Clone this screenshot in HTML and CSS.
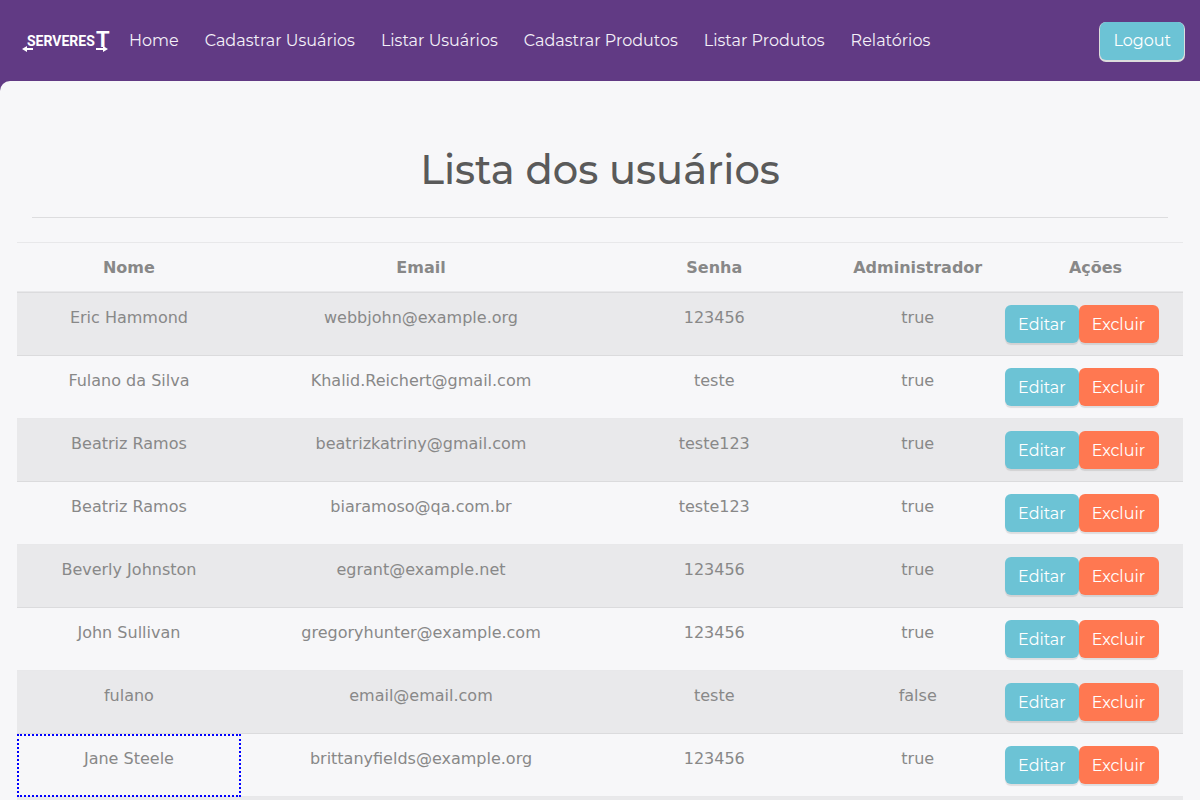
FILE: index.html
```html
<!DOCTYPE html>
<html lang="pt-BR">
<head>
<meta charset="utf-8">
<title>Lista dos usuários</title>
<link rel="stylesheet" href="styles.css">
</head>
<body>
<nav class="navbar">
  <a class="brand" href="#" aria-label="ServeRest">
    <svg width="90" height="30" viewBox="0 -2 90 30" fill="#fff">
      <text class="brand-text" x="5" y="18">SERVERES<tspan class="brand-tail" x="74" y="19">T</tspan></text>
      <path d="M0 21L5 18V20H11V22H5V24ZM86 21L81 18V20H74V22H81V24Z"/>
    </svg>
  </a>
  <a class="nav-link" href="#">Home</a>
  <a class="nav-link" href="#">Cadastrar Usuários</a>
  <a class="nav-link" href="#">Listar Usuários</a>
  <a class="nav-link" href="#">Cadastrar Produtos</a>
  <a class="nav-link" href="#">Listar Produtos</a>
  <a class="nav-link" href="#">Relatórios</a>
  <button class="btn btn-info logout" type="button">Logout</button>
</nav>
<div class="backdrop">
<main class="content">
  <h1 class="title">Lista dos usuários</h1>
  <hr class="rule">
  <table class="users">
    <colgroup><col class="c-name"><col class="c-email"><col class="c-pass"><col class="c-admin"><col class="c-actions"></colgroup>
    <thead><tr><th>Nome</th><th>Email</th><th>Senha</th><th>Administrador</th><th>Ações</th></tr></thead>
    <tbody>
      <tr><td>Eric Hammond</td><td>webbjohn@example.org</td><td>123456</td><td>true</td><td><div class="actions"><button class="btn btn-info" type="button">Editar</button><button class="btn btn-danger" type="button">Excluir</button></div></td></tr>
      <tr><td>Fulano da Silva</td><td>Khalid.Reichert@gmail.com</td><td>teste</td><td>true</td><td><div class="actions"><button class="btn btn-info" type="button">Editar</button><button class="btn btn-danger" type="button">Excluir</button></div></td></tr>
      <tr><td>Beatriz Ramos</td><td>beatrizkatriny@gmail.com</td><td>teste123</td><td>true</td><td><div class="actions"><button class="btn btn-info" type="button">Editar</button><button class="btn btn-danger" type="button">Excluir</button></div></td></tr>
      <tr><td>Beatriz Ramos</td><td>biaramoso@qa.com.br</td><td>teste123</td><td>true</td><td><div class="actions"><button class="btn btn-info" type="button">Editar</button><button class="btn btn-danger" type="button">Excluir</button></div></td></tr>
      <tr><td>Beverly Johnston</td><td>egrant@example.net</td><td>123456</td><td>true</td><td><div class="actions"><button class="btn btn-info" type="button">Editar</button><button class="btn btn-danger" type="button">Excluir</button></div></td></tr>
      <tr><td>John Sullivan</td><td>gregoryhunter@example.com</td><td>123456</td><td>true</td><td><div class="actions"><button class="btn btn-info" type="button">Editar</button><button class="btn btn-danger" type="button">Excluir</button></div></td></tr>
      <tr><td>fulano</td><td>email@email.com</td><td>teste</td><td>false</td><td><div class="actions"><button class="btn btn-info" type="button">Editar</button><button class="btn btn-danger" type="button">Excluir</button></div></td></tr>
      <tr><td class="marked">Jane Steele</td><td>brittanyfields@example.org</td><td>123456</td><td>true</td><td><div class="actions"><button class="btn btn-info" type="button">Editar</button><button class="btn btn-danger" type="button">Excluir</button></div></td></tr>
      <tr><td></td><td></td><td></td><td></td><td></td></tr>
    </tbody>
  </table>
</main>
</div>
</body>
</html>
```
FILE: styles.css
```css
* { box-sizing: border-box; }
html { height: 100%; }
body {
  margin: 0;
  height: 100%;
  overflow: hidden;
  background: #f7f7f9;
  color: #888;
  font: 16px/26px "DejaVu Sans", sans-serif;
}
.navbar {
  display: flex;
  align-items: center;
  gap: 26px;
  min-height: 81px;
  padding: 0 16px 0 22px;
  background: #613a84;
}
.brand { display: flex; margin-right: -9px; }
.brand-text { font: bold 14px Roboto, sans-serif; }
.brand-tail { font-size: 22px; }
.nav-link {
  color: #f4f0f8;
  font: 400 16px/24px Montserrat, sans-serif;
  text-decoration: none;
  white-space: nowrap;
}
.btn {
  height: 38px;
  padding: 1px 13px 0;
  border: 0;
  border-radius: 6px;
  color: #fff;
  font: 400 16px/24px Montserrat, sans-serif;
  box-shadow: 0 2px 1px rgba(0, 0, 0, 0.1);
}
.btn-info { background: #6cc3d5; }
.btn-danger { padding-right: 14px; background: #ff7851; }
.logout {
  margin-left: auto;
  padding-top: 0;
  box-shadow: 0 1px 0 1px #dcdcdc;
}
.backdrop { background: #613a84; }
.content {
  padding: 64px 17px 0;
  background: #f7f7f9;
  border-radius: 10px 0 0 0;
}
.title {
  margin: 0 0 22px;
  color: #5a5a5a;
  font: 500 40px/50px Montserrat, sans-serif;
  text-align: center;
}
.rule {
  height: 1px;
  margin: 0 15px 24px;
  border: 0;
  background: #dddddf;
}
.users {
  width: 100%;
  border-collapse: collapse;
  table-layout: fixed;
  text-align: center;
}
.c-name { width: 19.2%; }
.c-email { width: 30.9%; }
.c-pass { width: 19.4%; }
.c-admin { width: 15.5%; }
.c-actions { width: 15%; }
.users th, .users td {
  padding: 12px;
  border-top: 1px solid rgba(0, 0, 0, 0.06);
  vertical-align: top;
}
.users th { padding-bottom: 10px; border-bottom: 2px solid rgba(0, 0, 0, 0.06); }
.users tbody tr:nth-child(odd) { background: #e9e9eb; }
.actions { display: flex; margin: 0 -15px; }
.users .marked { outline: 2px dotted #00f; outline-offset: -2px; }
```
